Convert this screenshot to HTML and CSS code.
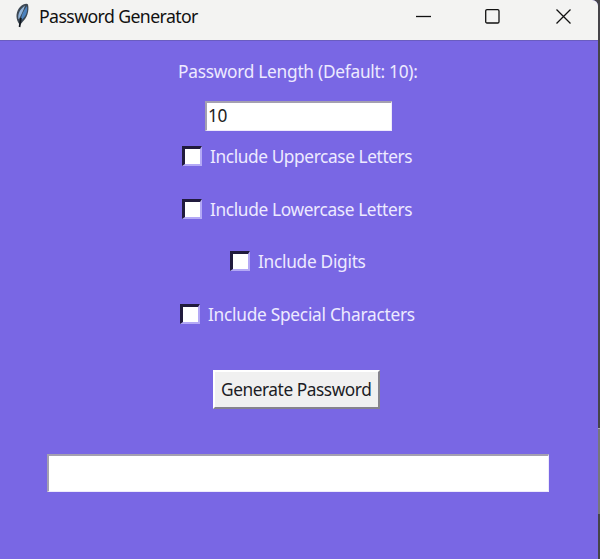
FILE: index.html
```html
<!DOCTYPE html>
<html lang="en">
<head>
<meta charset="utf-8">
<title>Password Generator</title>
<link rel="stylesheet" href="styles.css">
</head>
<body>
<div class="desktop">
  <main class="window">
    <header class="titlebar">
      <svg class="feather" viewBox="0 0 16 26" width="16" height="26">
        <path d="M3.500 20C0 14 1.500 8 5 4C8 1 12 0 13 1.500C14.500 8 12 15 7.500 19L5 22Z" fill="#3b4753"/>
        <path d="M3.500 16C2.500 11 5 6 10 2.500C8.500 8 6 12 4 16Z" fill="#91b4da"/>
        <path d="M6 17.500C6 12 9 7 12 3C13 9 10.500 14 6 17.500Z" fill="#4b82be"/>
        <path d="M6 15L4.500 24" fill="none" stroke="#10161e" stroke-width="1.700"/>
      </svg>
      <h1 class="title"><span class="text">Password Generator</span></h1>
      <div class="controls">
        <svg viewBox="0 0 16 16" width="16" height="16"><path d="M0 8.500H15"/></svg>
        <svg viewBox="0 0 16 16" width="16" height="16"><rect x="-0.300" y="1.700" width="13.300" height="13.300" rx="1.300"/></svg>
        <svg viewBox="0 0 16 16" width="16" height="16"><path d="M0.500 1.500L14.500 15.500M14.500 1.500L0.500 15.500"/></svg>
      </div>
    </header>
    <form class="form">
      <label class="length-label"><span class="text">Password Length (Default: 10):</span></label>
      <div class="entry length"><span class="text">10</span></div>
      <label class="check upper"><i class="box"></i><span class="text">Include Uppercase Letters</span></label>
      <label class="check lower"><i class="box"></i><span class="text">Include Lowercase Letters</span></label>
      <label class="check digits"><i class="box"></i><span class="text">Include Digits</span></label>
      <label class="check special"><i class="box"></i><span class="text">Include Special Characters</span></label>
      <button class="generate" type="button"><span class="text">Generate Password</span></button>
      <div class="entry result"></div>
    </form>
  </main>
  <aside class="edge"></aside>
</div>
</body>
</html>
```
FILE: styles.css
```css
* { box-sizing: border-box; }
body { margin: 0; font-family: "Noto Sans", sans-serif; font-size: 17.3px; }
.desktop { display: flex; width: 600px; height: 559px; background: #454449; overflow: hidden; }
.window { width: 598px; height: 559px; background: #7967e4; border-top-right-radius: 6px; overflow: hidden; }
.titlebar { display: flex; height: 41px; background: #f3f3f2; border-bottom: 1px solid #6a5dc0; padding-left: 15px; }
.feather { margin-top: 3px; flex: none; }
.title { margin: 4px 0 0 8px; font-size: 17.7px; font-weight: 400; line-height: 24px; color: #111; width: 160px; white-space: nowrap; }
.text { display: inline-block; white-space: nowrap; letter-spacing: -0.5px; }
.title .text { letter-spacing: -0.6px; }
.controls { display: flex; gap: 54px; margin: 8px 0 0 217px; }
.controls svg { fill: none; stroke: #111; stroke-width: 1.3; flex: none; overflow: visible; }
.form { display: flex; flex-direction: column; align-items: flex-start; color: #edeaff; }
.length-label { margin: 19px 0 0 178px; line-height: 24px; height: 24px; }
.length-label .text { letter-spacing: -0.26px; }
.entry { background: #fff; border: 1px solid #eeeafb; border-top: 2px solid #a4a0b0; border-left: 2px solid #a4a0b0; color: #222; }
.length { margin: 17px 0 0 205px; width: 187px; height: 30px; line-height: 26px; padding-left: 1px; }
.check { display: flex; align-items: flex-start; height: 24px; gap: 8px; line-height: 24px; }
.box { width: 20px; height: 20px; margin-top: 1px; background: #fff; border: 2px solid #b4a9f6; border-top: 3px solid #211b3d; border-left: 3px solid #211b3d; }
.upper { margin: 14px 0 0 182px; }
.upper .text { letter-spacing: -0.4px; }
.lower { margin: 29px 0 0 182px; }
.lower .text { letter-spacing: -0.36px; }
.digits { margin: 28px 0 0 230px; }
.digits .text { letter-spacing: -0.28px; }
.special { margin: 29px 0 0 180px; }
.special .text { letter-spacing: -0.26px; }
.generate { margin: 43px 0 0 213px; width: 167px; height: 39px; padding: 0 0 0 6px; border: 2px solid #fff; border-right: 2px solid #85838d; border-bottom: 2px solid #85838d; background: #f0f0f0; color: #1c1c25; font: inherit; text-align: left; }
.generate .text { letter-spacing: -0.44px; }
.result { margin: 45px 0 0 47px; width: 502px; height: 38px; }
.edge { width: 2px; height: 86px; margin-top: 428px; background: #77767c; border-top: 1px solid #aaa; }
```
